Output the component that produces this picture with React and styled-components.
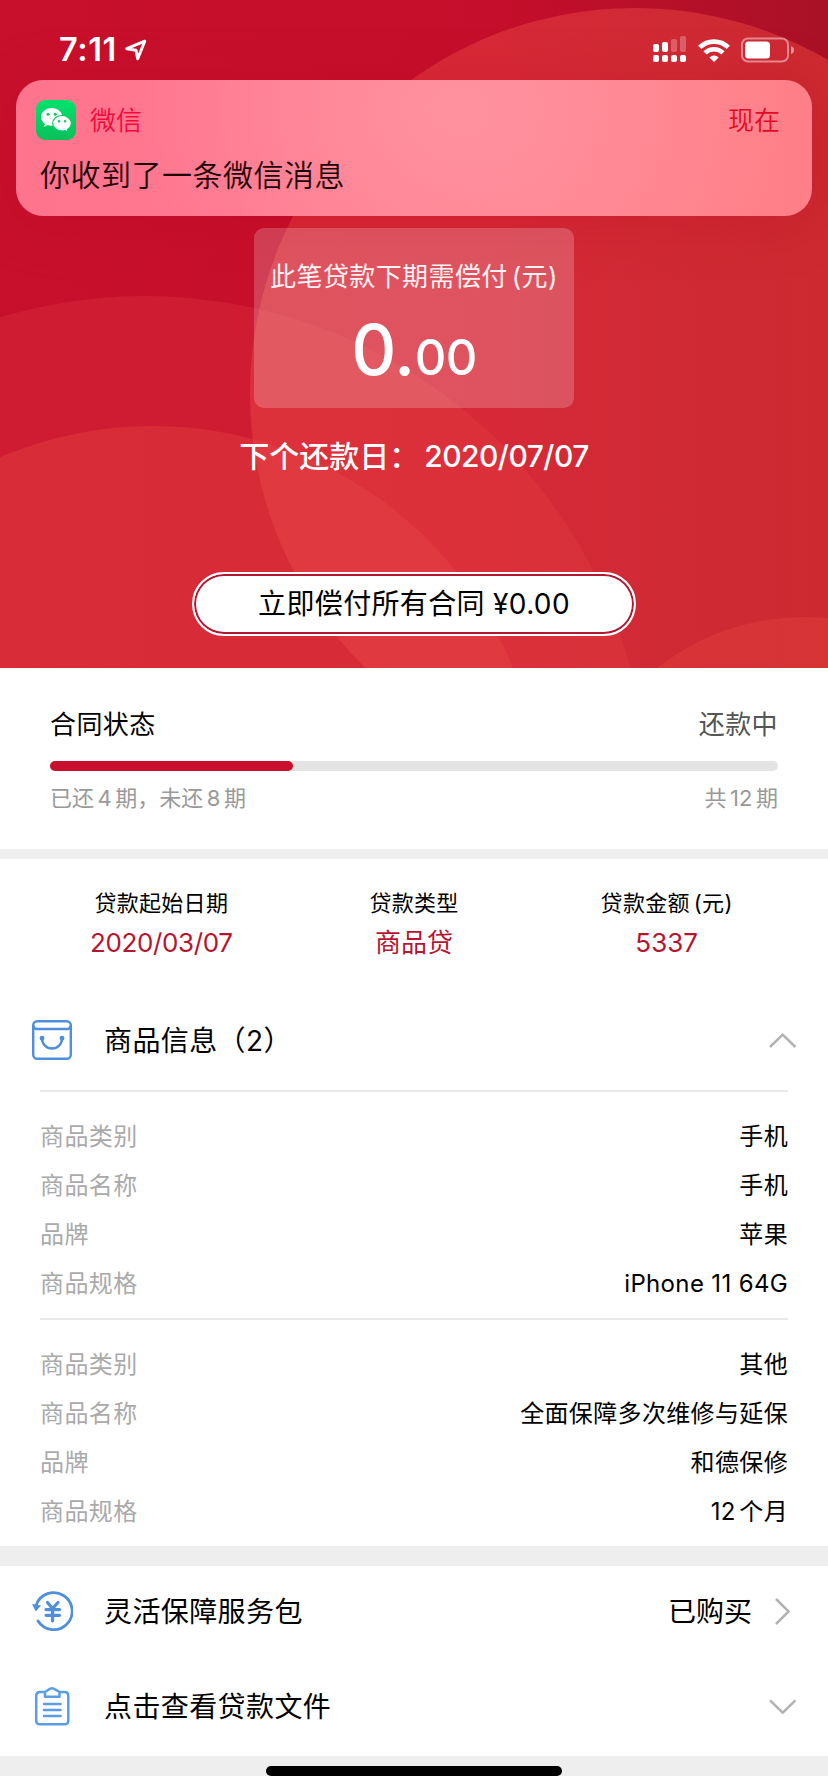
import React from "react";
import styled, { createGlobalStyle } from "styled-components";

const GlobalStyle = createGlobalStyle`
  * { box-sizing: border-box; }
  body {
    margin: 0;
    background: #fff;
    font-family: Inter, "Noto Sans CJK SC", sans-serif;
    color: #000;
    -webkit-font-smoothing: antialiased;
  }
`;

const Screen = styled.div`
  display: flex;
  flex-direction: column;
  width: 828px;
  height: 1792px;
  overflow: hidden;
  background: #fff;
  white-space: nowrap;
`;

const Hero = styled.header`
  position: relative;
  display: flex;
  flex-direction: column;
  align-items: center;
  height: 668px;
  flex: none;
  overflow: hidden;
`;

const HeroBackdrop = styled.svg`
  position: absolute;
  inset: 0;
`;

const StatusBar = styled.div`
  position: relative;
  display: flex;
  align-items: center;
  justify-content: space-between;
  width: 100%;
  height: 80px;
  padding: 19px 34px 0 59px;
  color: #fff;
`;

const Clock = styled.div`
  display: flex;
  align-items: center;
  gap: 7px;
  font-size: 32.5px;
  font-weight: 600;
  line-height: 40px;
  letter-spacing: 0.6px;
`;

const Indicators = styled.div`
  display: flex;
  align-items: center;
  gap: 11px;
`;

const Notification = styled.section`
  position: absolute;
  top: 80px;
  left: 16px;
  width: 796px;
  height: 136px;
  padding: 20px 32px 0 20px;
  border-radius: 27px;
  background:
    radial-gradient(ellipse 330px 260px at 440px 30px, rgba(255, 146, 160, 0.95), rgba(255, 142, 155, 0) 100%),
    linear-gradient(90deg, #ff748d 0%, #ff778f 28%, #ff858f 66%, #ff7f88 100%);
  box-shadow: 0 6px 56px rgba(185, 0, 22, 0.25);
`;

const NotificationHead = styled.div`
  display: flex;
  align-items: center;
  height: 40px;
`;

const AppName = styled.span`
  margin-left: 14px;
  flex: 1;
  font-size: 26px;
  font-weight: 350;
  line-height: 40px;
  padding-top: 2px;
  color: #f2083a;
`;

const NotificationTime = styled.span`
  font-size: 26px;
  font-weight: 350;
  line-height: 40px;
  padding-top: 2px;
  color: #e30b24;
`;

const NotificationBody = styled.p`
  margin: 15px 0 0 4px;
  font-size: 30px;
  font-weight: 350;
  line-height: 40px;
  letter-spacing: 0.5px;
  color: #1c0206;
`;

const AmountCard = styled.section`
  position: relative;
  display: flex;
  flex-direction: column;
  align-items: center;
  width: 320px;
  height: 180px;
  margin-top: 148px;
  padding-top: 29px;
  border-radius: 10px;
  background: rgba(255, 255, 255, 0.2);
  color: #fff;
`;

const AmountLabel = styled.div`
  font-size: 26px;
  line-height: 40px;
  letter-spacing: 0.4px;
  color: #fff0f1;
`;

const Unit = styled.span`
  margin-left: ${(p) => p.$gap}px;
`;

const Amount = styled.div`
  display: flex;
  align-items: baseline;
  margin-top: 18px;
  font-size: 70px;
  font-weight: 500;
  line-height: 70px;
  letter-spacing: -0.6px;
`;

const Cents = styled.span`
  font-size: 49px;
`;

const DueDate = styled.div`
  position: relative;
  display: flex;
  gap: 5px;
  margin-top: 28px;
  font-size: 30px;
  font-weight: 500;
  line-height: 40px;
  color: #fff;
`;

const DueValue = styled.span`
  letter-spacing: -0.5px;
`;

const PayButton = styled.button`
  position: relative;
  width: 444px;
  height: 64px;
  margin-top: 96px;
  padding: 0;
  border: 2px solid #fff;
  border-radius: 32px;
  background: #fff;
  box-shadow: inset 0 0 0 2px #b5152f;
  font: 400 28px/60px Inter, "Noto Sans CJK SC", sans-serif;
  letter-spacing: 0.35px;
  color: #000;
`;

const Progress = styled.section`
  height: 181px;
  flex: none;
  padding: 37px 50px 0;
`;

const SplitLine = styled.div`
  display: flex;
  justify-content: space-between;
  font-size: ${(p) => (p.$small ? 22 : 26)}px;
  line-height: ${(p) => (p.$small ? 32 : 40)}px;
  letter-spacing: ${(p) => (p.$small ? 0 : 0.4)}px;
  color: ${(p) => (p.$small ? "#999" : "#000")};
`;

const State = styled.span`
  color: #555;
`;

const Num = styled.span`
  margin: 0 ${(p) => p.$after ?? 3.5}px 0 ${(p) => p.$before ?? 3.5}px;
`;

const Track = styled.div`
  height: 10px;
  margin: 16px 0 11px;
  border-radius: 5px;
  background: #e4e4e4;
`;

const Fill = styled.div`
  height: 100%;
  border-radius: 5px;
  background: #c8102e;
`;

const Band = styled.div`
  height: ${(p) => p.$size}px;
  flex: none;
  background: #eee;
`;

const Facts = styled.section`
  display: grid;
  grid-template-columns: repeat(3, 1fr);
  height: 136px;
  flex: none;
  padding: 29px 35px 0;
`;

const Fact = styled.div`
  display: flex;
  flex-direction: column;
  align-items: center;
`;

const FactLabel = styled.span`
  font-size: 22px;
  line-height: 30px;
  letter-spacing: 0.3px;
`;

const FactValue = styled.span`
  margin-top: 5px;
  font-size: 26px;
  line-height: 40px;
  letter-spacing: ${(p) => p.$tracking ?? 0}px;
  color: #b5152f;
`;

const Row = styled.div`
  display: flex;
  align-items: center;
  height: 90px;
  flex: none;
  padding: 0 31px;
  margin-bottom: 5px;
`;

const RowTitle = styled.span`
  flex: 1;
  margin-left: 31px;
  padding-top: 1px;
  font-size: 28px;
  line-height: 40px;
  letter-spacing: 0.4px;
`;

const RowValue = styled.span`
  margin-right: 17px;
  padding-top: 1px;
  font-size: 28px;
  line-height: 40px;
`;

const Goods = styled.dl`
  margin: 0 40px;
  height: 228px;
  flex: none;
  padding-top: 20px;
  border-top: 2px solid #e8e8e8;
`;

const GoodsRow = styled.div`
  display: flex;
  justify-content: space-between;
  height: 49px;
  font-size: 24px;
  line-height: 49px;
`;

const Term = styled.dt`
  color: #aaa;
  letter-spacing: 0.4px;
`;

const Detail = styled.dd`
  margin: 0;
  letter-spacing: 0.35px;
`;

const Footer = styled.footer`
  display: flex;
  justify-content: center;
  align-items: flex-end;
  height: 20px;
  flex: none;
  background: #eee;
`;

const HomeIndicator = styled.div`
  width: 296px;
  height: 10px;
  border-radius: 5px;
  background: #000;
`;

const Backdrop = () => (
  <HeroBackdrop width="828" height="668" viewBox="0 0 828 668">
    <defs>
      <linearGradient id="base" x1="0" x2="1" y1="0" y2="0">
        <stop offset="0" stopColor="#c8102c" />
        <stop offset="0.6" stopColor="#c50e2b" />
        <stop offset="1" stopColor="#a91127" />
      </linearGradient>
      <linearGradient id="disc" x1="0" x2="1" y1="0" y2="0">
        <stop offset="0" stopColor="#eb4845" stopOpacity="0.46" />
        <stop offset="0.4" stopColor="#eb4845" stopOpacity="0.46" />
        <stop offset="0.75" stopColor="#e43a38" stopOpacity="0.6" />
      </linearGradient>
    </defs>
    <rect width="828" height="668" fill="url(#base)" />
    <circle cx="635" cy="393" r="385" fill="url(#disc)" />
    <circle cx="145" cy="799" r="503" fill="#f04f4c" fillOpacity="0.2" />
    <circle cx="153" cy="815" r="389" fill="#e84d48" fillOpacity="0.32" />
    <circle cx="805" cy="857" r="240" fill="#e84840" fillOpacity="0.35" />
  </HeroBackdrop>
);

const LocationArrow = () => (
  <svg width="24" height="24" viewBox="0 0 24 24" fill="none" stroke="#fff" strokeWidth="3" strokeLinejoin="round">
    <path d="M2.8 10.7 20.7 3.2 13.7 20.8 12 12.2Z" />
  </svg>
);

const Signal = () => (
  <svg width="34" height="27" viewBox="0 0 34 27" fill="#fff">
    <rect x="0" y="8" width="6" height="8" rx="2" />
    <rect x="9" y="6" width="6" height="10" rx="2" />
    <rect x="18" y="3" width="6" height="13" rx="2" opacity="0.25" />
    <rect x="27" y="0" width="6" height="16" rx="2" opacity="0.25" />
    {[0, 9, 18, 27].map((x) => (
      <rect key={x} x={x} y="19" width="6" height="7" rx="2" />
    ))}
  </svg>
);

const Wifi = () => (
  <svg width="32" height="24" viewBox="0 0 32 24" fill="none" stroke="#fff" strokeWidth="4.6">
    <path d="M1.7 9.4a20.6 20.6 0 0 1 28.6 0" />
    <path d="M7 14.9a13 13 0 0 1 18 0" />
    <path d="M16 24 11.4 19.4a6.7 6.7 0 0 1 9.2 0Z" fill="#fff" stroke="none" />
  </svg>
);

const Battery = () => (
  <svg width="53" height="26" viewBox="0 0 53 26">
    <rect x="1" y="1.5" width="46" height="23" rx="6" fill="none" stroke="#fff" strokeOpacity="0.45" strokeWidth="2" />
    <rect x="4" y="4.5" width="25" height="17" rx="3.5" fill="#fff" />
    <path d="M50 9q3 1 3 4t-3 4Z" fill="#fff" fillOpacity="0.5" />
  </svg>
);

const WeChatIcon = () => (
  <svg width="40" height="40" viewBox="0 0 40 40">
    <defs>
      <linearGradient id="wx" x1="0" x2="0" y1="0" y2="1">
        <stop offset="0" stopColor="#03e26d" />
        <stop offset="1" stopColor="#0abf5b" />
      </linearGradient>
    </defs>
    <rect width="40" height="40" rx="9" fill="url(#wx)" />
    <path
      fill="#fff"
      d="M15.7 8C9.8 8 5 12 5 17c0 2.800 1.500 5.200 3.900 6.900L8 27l3.700-1.900c1.300.4 2.600.6 4 .6 5.900 0 10.700-3.900 10.700-8.700S21.600 8 15.700 8Z"
    />
    <path
      fill="#fff"
      stroke="#06cf63"
      strokeWidth="1.200"
      d="M26 15.500c-5.200 0-9.300 3.500-9.300 7.800s4.100 7.800 9.300 7.800c1.100 0 2.200-.2 3.200-.5l3 1.700-.8-2.700c2.300-1.400 3.900-3.700 3.900-6.300 0-4.300-4.100-7.800-9.300-7.800Z"
    />
    <g fill="#06cf63">
      <circle cx="12" cy="14.300" r="1.500" />
      <circle cx="19.200" cy="14.300" r="1.500" />
      <circle cx="23" cy="21.300" r="1.200" />
      <circle cx="29" cy="21.300" r="1.200" />
    </g>
  </svg>
);

const BagIcon = () => (
  <svg width="42" height="42" viewBox="0 0 42 42" fill="none" stroke="#4f8fdc" strokeWidth="2.400">
    <rect x="2.200" y="2.200" width="37.600" height="37.600" rx="4" />
    <path d="M2.500 6.500V6.800q0 3.200 3.500 3.200h30q3.500 0 3.500-3.200" />
    <path d="M11 19.500a10 10 0 0 0 20 0" />
    <circle cx="11" cy="19.300" r="1.700" fill="#4f8fdc" strokeWidth="1.500" />
    <circle cx="31" cy="19.300" r="1.700" fill="#4f8fdc" strokeWidth="1.500" />
  </svg>
);

const RefundIcon = () => (
  <svg width="42" height="42" viewBox="0 0 42 42" fill="none" stroke="#4f8fdc" strokeWidth="2.800">
    <path d="M5.200 15A18.500 18.500 0 1 1 7 31" strokeLinecap="round" />
    <path d="M1 14 10 15.500 4.800 21.500Z" fill="#4f8fdc" stroke="none" />
    <path d="M16.500 12.500 21.500 18.500 27 12.500M21.600 18.500V31M15 19.600h13.500M15 25.300h13.500" strokeLinecap="round" strokeWidth="3.200" />
  </svg>
);

const ClipboardIcon = () => (
  <svg width="42" height="42" viewBox="0 0 42 42" fill="none" stroke="#5a9de4" strokeWidth="2.500" strokeLinejoin="round">
    <path d="M13.500 7H9Q5.200 7 5.200 11V35.500Q5.200 39.300 9 39.300H33.500Q37.300 39.300 37.300 35.500V11Q37.300 7 33.500 7H29" />
    <path d="M14 11.800V7L17.500 4.700Q21 1.800 24.500 4.700L28.500 7V11.800Z" />
    <path d="M13 19h16.500M13 25h16.500M13 31h16.500" strokeLinecap="round" />
  </svg>
);

const CHEVRONS = {
  up: "M1 14 13.700 1.700 26.400 14",
  down: "M1 1.400 13.700 13.700 26.400 1.400",
  right: "M7 1 19.600 13.500 7 26",
};

const Chevron = ({ dir }) => (
  <svg
    width="28"
    height={dir === "right" ? 27 : 15}
    viewBox={dir === "right" ? "0 0 28 27" : "0 0 28 15"}
    fill="none"
    stroke="#b2b2b2"
    strokeWidth="2.500"
  >
    <path d={CHEVRONS[dir]} />
  </svg>
);

const goods = [
  [
    ["商品类别", "手机"],
    ["商品名称", "手机"],
    ["品牌", "苹果"],
    ["商品规格", "iPhone 11 64G"],
  ],
  [
    ["商品类别", "其他"],
    ["商品名称", "全面保障多次维修与延保"],
    ["品牌", "和德保修"],
    ["商品规格", <React.Fragment key="months"><Num $before={0}>12</Num>个月</React.Fragment>],
  ],
];

const paid = 4;
const total = 12;

export default function App() {
  return (
    <Screen>
      <GlobalStyle />
      <Hero>
        <Backdrop />
        <Notification>
          <NotificationHead>
            <WeChatIcon />
            <AppName>微信</AppName>
            <NotificationTime>现在</NotificationTime>
          </NotificationHead>
          <NotificationBody>你收到了一条微信消息</NotificationBody>
        </Notification>
        <StatusBar>
          <Clock>
            7:11
            <LocationArrow />
          </Clock>
          <Indicators>
            <Signal />
            <Wifi />
            <Battery />
          </Indicators>
        </StatusBar>
        <AmountCard>
          <AmountLabel>
            此笔贷款下期需偿付<Unit $gap={4}>(元)</Unit>
          </AmountLabel>
          <Amount>
            0.<Cents>00</Cents>
          </Amount>
        </AmountCard>
        <DueDate>
          <span>下个还款日：</span>
          <DueValue>2020/07/07</DueValue>
        </DueDate>
        <PayButton type="button">立即偿付所有合同 ¥0.00</PayButton>
      </Hero>

      <Progress>
        <SplitLine>
          <span>合同状态</span>
          <State>还款中</State>
        </SplitLine>
        <Track>
          <Fill style={{ width: `${(paid / total) * 100}%` }} />
        </Track>
        <SplitLine $small>
          <span>
            已还<Num>4</Num>期，未还<Num>8</Num>期
          </span>
          <span>
            共<Num>12</Num>期
          </span>
        </SplitLine>
      </Progress>

      <Band $size={10} />

      <Facts>
        <Fact>
          <FactLabel>贷款起始日期</FactLabel>
          <FactValue $tracking={-0.35}>2020/03/07</FactValue>
        </Fact>
        <Fact>
          <FactLabel>贷款类型</FactLabel>
          <FactValue>商品贷</FactValue>
        </Fact>
        <Fact>
          <FactLabel>
            贷款金额<Unit $gap={4}>(元)</Unit>
          </FactLabel>
          <FactValue>5337</FactValue>
        </Fact>
      </Facts>

      <Row>
        <BagIcon />
        <RowTitle>商品信息（2）</RowTitle>
        <Chevron dir="up" />
      </Row>
      {goods.map((rows, i) => (
        <Goods key={i}>
          {rows.map(([term, detail], j) => (
            <GoodsRow key={j}>
              <Term>{term}</Term>
              <Detail>{detail}</Detail>
            </GoodsRow>
          ))}
        </Goods>
      ))}

      <Band $size={20} />

      <Row>
        <RefundIcon />
        <RowTitle>灵活保障服务包</RowTitle>
        <RowValue>已购买</RowValue>
        <Chevron dir="right" />
      </Row>
      <Row>
        <ClipboardIcon />
        <RowTitle>点击查看贷款文件</RowTitle>
        <Chevron dir="down" />
      </Row>

      <Footer>
        <HomeIndicator />
      </Footer>
    </Screen>
  );
}
